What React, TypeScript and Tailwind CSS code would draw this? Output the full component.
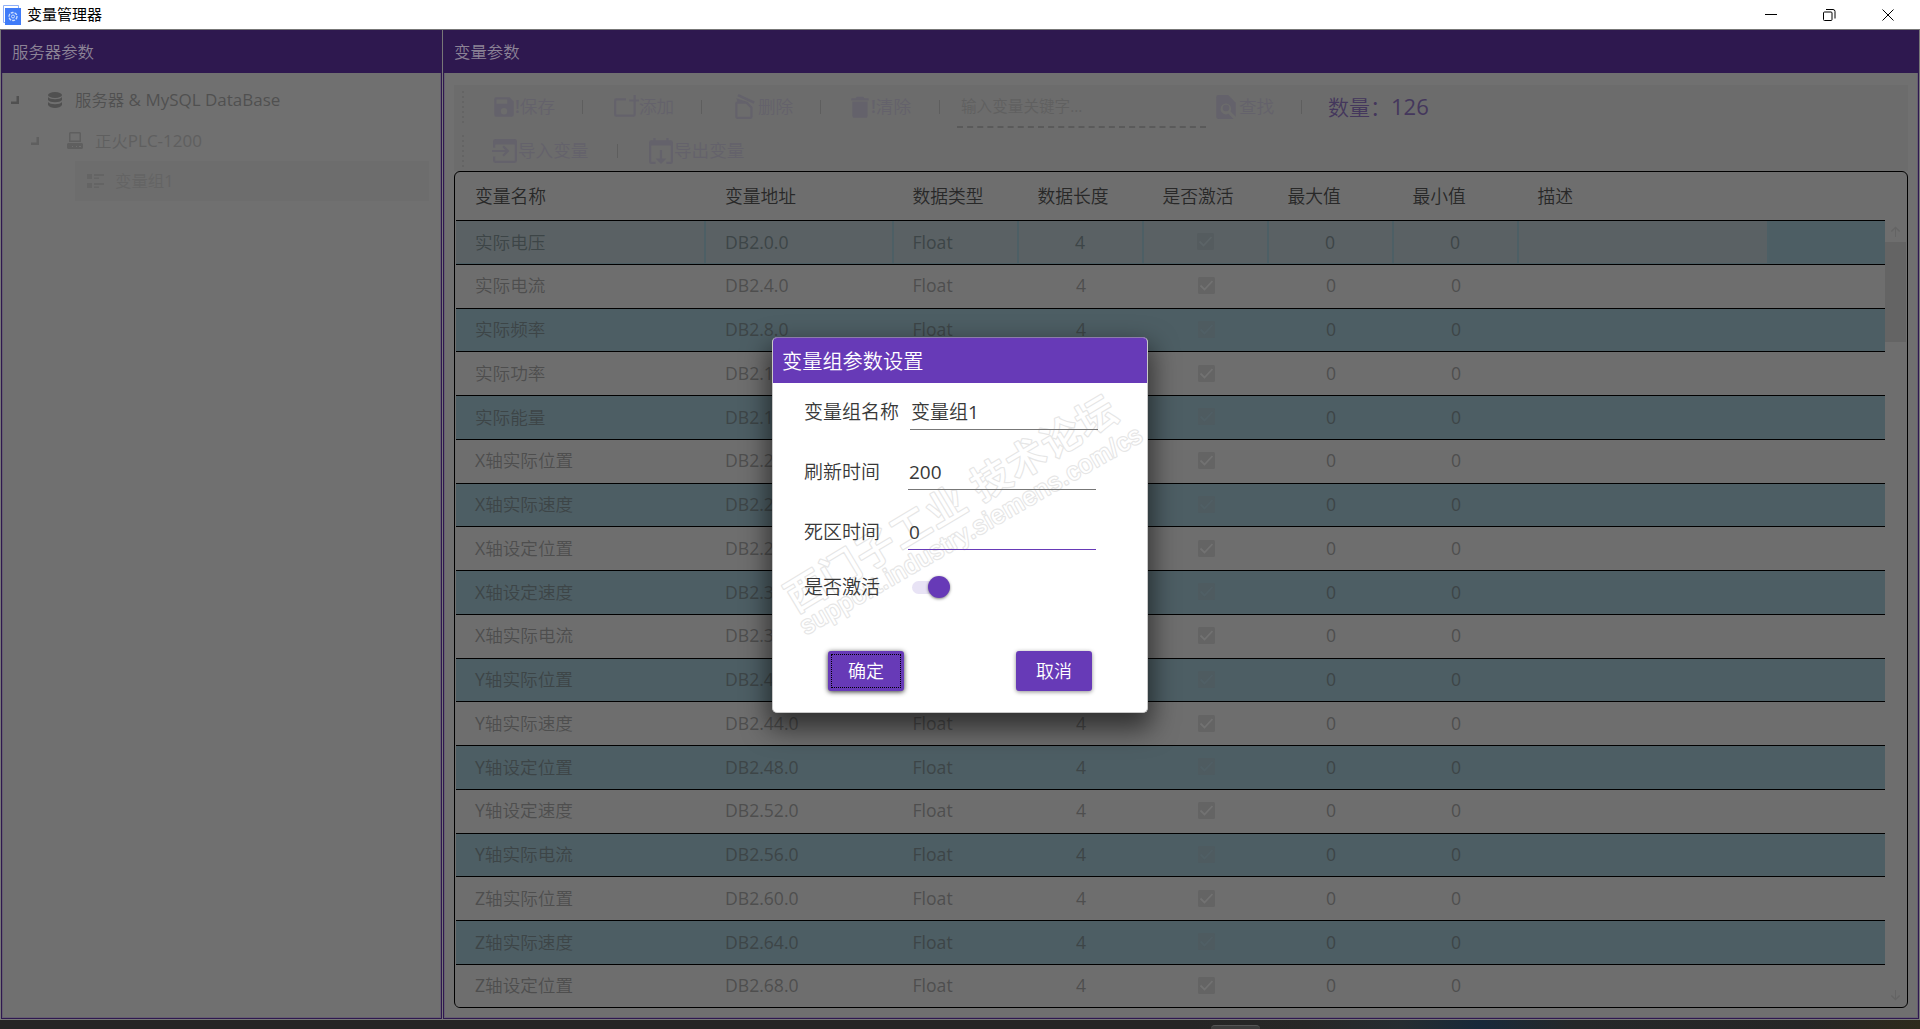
import type { ReactNode } from "react";

const names = ["实际电压","实际电流","实际频率","实际功率","实际能量","X轴实际位置","X轴实际速度","X轴设定位置","X轴设定速度","X轴实际电流","Y轴实际位置","Y轴实际速度","Y轴设定位置","Y轴设定速度","Y轴实际电流","Z轴实际位置","Z轴实际速度","Z轴设定位置"];
const headers = ["变量名称", "变量地址", "数据类型", "数据长度", "是否激活", "最大值", "最小值", "描述"];
const cols = "grid grid-cols-[250px_187.5px_125px_125px_125px_125px_125px_250px_1fr]";

function Icon({ d, className }: { d: string; className: string }) {
  return (
    <svg viewBox="0 0 24 24" className={className} fill="currentColor">
      <path fillRule="evenodd" d={d} />
    </svg>
  );
}

function Tool({ d, label, className }: { d: string; label: ReactNode; className: string }) {
  return (
    <div className={`flex h-10 shrink-0 items-center text-[#64626b] ${className}`}>
      <Icon d={d} className="size-[26px] shrink-0" />
      <span className="whitespace-nowrap text-[17.6px]">{label}</span>
    </div>
  );
}

const icons = {
  save: "M15 9H5V5h10m-3 14a3 3 0 1 1 0-6 3 3 0 0 1 0 6M17 3H5a2 2 0 0 0-2 2v14a2 2 0 0 0 2 2h14a2 2 0 0 0 2-2V7z",
  add: "M19 11h2v8a2 2 0 0 1-2 2H3a2 2 0 0 1-2-2V6a2 2 0 0 1 2-2h9v2H3v13h16zM19 1h2v4h4v2h-4v4h-2V7h-4V5h4z",
  remove: "M5 7h9l5 5v9a2 2 0 0 1-2 2H5a2 2 0 0 1-2-2V9a2 2 0 0 1 2-2m0 2v12h12v-8l-4-4zM6 0l15 7-1 2L5 2zM4 4l9 3H5z",
  trash: "M20 4h-4l-1-1.500h-6L8 4H4v2h16M5 20a2 2 0 0 0 2 2h10a2 2 0 0 0 2-2V7H5z",
  search: "M14 1H5a2 2 0 0 0-2 2v18a2 2 0 0 0 2 2h14l-4.8-4.8a5 5 0 1 1 2-2L21 21V8zm-2 9a3 3 0 1 0 0 6 3 3 0 0 0 0-6",
  import: "M3 1h18a2 2 0 0 1 2 2v18a2 2 0 0 1-2 2H3a2 2 0 0 1-2-2v-4h2v4h18V6H3v3H1V3a2 2 0 0 1 2-2m8 6 5 5-5 5-1.4-1.4 2.6-2.600H-1v-2h13.200L9.600 8.400z",
  export: "M5 2V0h2v2h10V0h2v2h2a2 2 0 0 1 2 2v18a2 2 0 0 1-2 2h-4v-2h4V7H3v15h4v2H3a2 2 0 0 1-2-2V4a2 2 0 0 1 2-2zm6 9h2v8h4l-5 5-5-5h4z",
};

function Divider({ className }: { className: string }) {
  return <i className={`h-[14px] w-px shrink-0 bg-[#5e5e5e] ${className}`} />;
}

function Grip() {
  return <i className="ml-2 h-8 w-0.5 shrink-0 bg-[repeating-linear-gradient(to_bottom,#646464_0_2px,transparent_2px_5px)]" />;
}

function Panel({ title, className, children }: { title: string; className: string; children: ReactNode }) {
  return (
    <section className={`flex flex-col bg-[#2e184f] ${className}`}>
      <h2 className="h-[43px] shrink-0 pl-[11px] text-[16.4px] leading-[44px] text-[#8c8396]">{title}</h2>
      <div className="mx-px mb-px min-h-0 flex-1 border border-[#665f70] border-t-0 bg-[#707070]">{children}</div>
    </section>
  );
}

function Expander() {
  return (
    <svg viewBox="0 0 8 8" className="size-2 shrink-0" fill="currentColor">
      <path d="M5.500 0H8v8H0V5.500h5.500z" />
    </svg>
  );
}

function Tree() {
  return (
    <div className="pl-2 pr-[11px] pt-[7px] text-[16.400px]">
      <div className="flex h-10 items-center text-[#505050]">
        <Expander />
        <svg viewBox="0 0 14 16" className="ml-[29px] h-4 w-3.5" fill="currentColor">
          <ellipse cx="7" cy="3" rx="7" ry="3" />
          <path d="M0 5c2 3 12 3 14 0v3c-2 3-12 3-14 0zM0 10c2 3 12 3 14 0v3c-2 4-12 4-14 0z" />
        </svg>
        <span className="ml-[13px] whitespace-pre">服务器<span className="text-[17px] font-normal"> &amp; MySQL DataBase</span></span>
      </div>
      <div className="flex h-[41px] items-center pl-5 text-[#5f5f5f]">
        <Expander />
        <svg viewBox="0 0 16 17" className="ml-7 h-[17px] w-4" fill="currentColor">
          <path fillRule="evenodd" d="M3 0h10l1 1v9H2V1zm.500 1.500v7h9v-7zM1 11h14l1 1v4l-1 1H1l-1-1v-4zm4 3v1h1v-1zm4 0v1h1v-1zm3 0v1h2v-1z" />
        </svg>
        <span className="ml-3">正火<span className="text-[17px] font-normal">PLC-1200</span></span>
      </div>
      <div className="ml-16 flex h-10 items-center bg-[#6d6d6d] pl-3 text-[#646464]">
        <svg viewBox="0 0 17 14" className="h-3.5 w-[17px]" fill="currentColor">
          <path d="M0 0h5v5H0zM7 0h10v2H7zM7 3.500h5v1.500H7zM0 9h5v5H0zM7 9h10v2H7zM7 12.500h5V14H7z" />
        </svg>
        <span className="ml-[11px]">变量组<span className="font-normal">1</span></span>
      </div>
    </div>
  );
}

function Check({ box, tick }: { box: string; tick: string }) {
  return (
    <svg viewBox="0 0 17 17" className="size-[17px]">
      <rect width="17" height="17" rx="1.500" fill={box} />
      <path d="m2.500 8.500 4 4 8-8.500" fill="none" stroke={tick} strokeWidth="1.800" />
    </svg>
  );
}

function Row({ name, i }: { name: string; i: number }) {
  const alt = i % 2 === 0;
  const cell = i === 0 ? "flex h-full items-center bg-[#5a6164] border-r-2 border-[#4d5f65]" : "flex h-full items-center";
  const box = i === 0 ? "#555c5f" : alt ? "#4e5b60" : "#646464";
  const tick = i === 0 ? "#5c6467" : alt ? "#505f65" : "#727272";
  const axis = name.charCodeAt(0) < 128 ? name[0] : "";
  return (
    <div className={`${cols} h-[43.760px] shrink-0 items-center border-b border-black pb-px text-[17.600px] font-normal ${alt ? "bg-[#4d5e64] text-[#3d4547]" : "bg-[#6e6e6e] text-[#4e4e4e]"}`}>
      <div className={`${cell} pl-[19px]`}>
        {axis}
        <span className="font-[350]">{name.slice(axis.length)}</span>
      </div>
      <div className={`${cell} pl-[19px]`}>{`DB2.${i * 4}.0`}</div>
      <div className={`${cell} pl-[19px]`}>Float</div>
      <div className={`${cell} justify-center`}>4</div>
      <div className={`${cell} justify-center`}><Check box={box} tick={tick} /></div>
      <div className={`${cell} justify-center`}>0</div>
      <div className={`${cell} justify-center`}>0</div>
      <div className={cell} />
    </div>
  );
}

function VariableTable() {
  return (
    <div className="flex h-[837px] w-[1454px] flex-col overflow-hidden rounded-[6px] border border-black bg-[#6e6e6e] pl-px">
      <div className={`${cols} h-[49px] w-[1429px] shrink-0 items-center border-b border-black text-[17.800px] text-[#282828]`}>
        {headers.map((h) => (
          <span key={h} className="pl-[19px]">{h}</span>
        ))}
      </div>
      <div className="flex min-h-0 flex-1">
        <div className="flex w-[1429px] flex-col overflow-hidden">
          {names.map((n, i) => (
            <Row key={i} name={n} i={i} />
          ))}
        </div>
        <div className="flex w-[21px] flex-col items-center">
          <Icon className="mb-[5px] mt-[5px] size-[11px] shrink-0 text-[#646464]" d="M11 24V6l-7 7-2-2L12 1l10 10-2 2-7-7v18z" />
          <i className="h-[100px] w-full bg-[#646464]" />
          <Icon className="mb-1.5 mt-auto size-[11px] shrink-0 text-[#646464]" d="M11 0v18l-7-7-2 2 10 10 10-10-2-2-7 7V0z" />
        </div>
      </div>
    </div>
  );
}

function Toolbar() {
  return (
    <div className="w-[1454px] bg-[#6c6c6c]">
      <div className="flex h-[43px] items-center">
        <Grip />
        <Tool className="ml-[27px] w-[91px]" d={icons.save} label={<><b className="-ml-0.5 font-semibold">!</b>保存</>} />
        <Divider className="" />
        <Tool className="ml-[30px] w-[85px]" d={icons.add} label="添加" />
        <Divider className="ml-[3px]" />
        <Tool className="ml-[30px] w-[84px]" d={icons.remove} label="删除" />
        <Divider className="ml-[4px]" />
        <Tool className="ml-[26px] w-[89px]" d={icons.trash} label={<><b className="-ml-0.5 font-semibold">!</b>清除</>} />
        <Divider className="ml-[3px]" />
        <div className="ml-[17px] flex h-full w-[249px] shrink-0 items-center self-start whitespace-nowrap border-b-2 border-dashed border-[#5a5a5a] pl-1 pt-0.5 text-[15.600px] text-[#606060]">输入变量关键字<span className="font-normal">...</span></div>
        <Tool className="ml-[7px] w-[84px]" d={icons.search} label="查找" />
        <Divider className="ml-1" />
        <div className="ml-[26px] whitespace-nowrap text-[21px] text-[#44375c]">数量：<span className="text-[22px] font-normal">126</span></div>
      </div>
      <div className="flex h-[43px] items-center pt-0.5">
        <Grip />
        <Tool className="ml-7 w-[125px]" d={icons.import} label="导入变量" />
        <Divider className="" />
        <Tool className="ml-[30px] w-[124px]" d={icons.export} label="导出变量" />
      </div>
    </div>
  );
}

function Field({ label, value, line, className }: { label: string; value: ReactNode; line: string; className: string }) {
  return (
    <div className={`flex h-[34px] items-start ${className}`}>
      <span className="w-[104px] shrink-0 whitespace-nowrap leading-[33px]">{label}</span>
      <span className={`h-[34px] w-[188px] shrink-0 border-b leading-[33px] ${line}`}>{value}</span>
    </div>
  );
}

function Watermark() {
  return (
    <svg viewBox="0 0 375 376" className="pointer-events-none absolute left-0 top-0 h-[376px] w-[375px]" fill="#ffffff" stroke="#e6e6e6" strokeWidth="2.400" strokeLinejoin="round" style={{ paintOrder: "stroke" }}>
      <text transform="translate(23 275) rotate(-31)" fontSize="39" fontWeight="500" textLength="378">西门子工业 技术论坛</text>
      <text transform="translate(33 297) rotate(-30)" fontSize="25" fontWeight="400" fontFamily="Liberation Sans" textLength="390">support.industry.siemens.com/cs</text>
    </svg>
  );
}

function Dialog() {
  return (
    <div className="absolute left-[772px] top-[337px] h-[376px] w-[376px] overflow-hidden rounded-[5px] border border-[#c9c9c9] border-t-[#8d7bab] bg-white text-[19px] text-[#383838] shadow-[0_12px_26px_4px_rgba(0,0,0,0.550)]">
      <Watermark />
      <h1 className="relative h-[45px] bg-[#673ab7] pl-[9px] text-[20.200px] leading-[46px] text-white">变量组参数设置</h1>
      <div className="relative pl-[31px] pt-[13px]">
        <Field label="变量组名称" value={<>变量组<span className="font-normal">1</span></>} line="border-[#777] ml-0.5 pl-px" className="" />
        <Field label="刷新时间" value="200" line="border-[#777] font-normal pl-px" className="mt-[26px]" />
        <Field label="死区时间" value="0" line="border-[#673ab7] font-normal pl-px" className="mt-[26px]" />
        <div className="mt-[21px] flex h-8 items-center">
          <span className="w-[108px]">是否激活</span>
          <span className="flex h-[13px] w-[38px] items-center justify-end rounded-full bg-[#e8e3f5]">
            <i className="size-[22px] shrink-0 rounded-full bg-[#673ab7] shadow-[0_1px_3px_rgba(0,0,0,0.500)]" />
          </span>
        </div>
      </div>
      <div className="relative mt-[48px] flex gap-[112px] pl-[55px] text-[18px] text-white">
        <button className="h-10 w-[76px] rounded-[3px] bg-[#673ab7] p-[3px] shadow-[0_1px_5px_rgba(0,0,0,0.800)]">
          <span className="flex h-full items-center justify-center border border-dotted border-black">确定</span>
        </button>
        <button className="h-10 w-[76px] rounded-[3px] bg-[#673ab7] shadow-[0_1px_4px_rgba(0,0,0,0.450)]">取消</button>
      </div>
    </div>
  );
}

export default function App() {
  return (
    <main className="relative flex h-[1029px] w-[1920px] flex-col overflow-hidden bg-[#272727] font-['Open_Sans','Noto_Sans_CJK_SC',sans-serif] font-[350]">
      <header className="flex h-[29px] shrink-0 items-center bg-white pl-[3px]">
        <svg viewBox="0 0 18 20" className="h-5 w-[18px]">
          <path d="M.500.500h15v17H.500z" fill="none" stroke="#8fb0f8" />
          <path d="M2 3h16v17H2z" fill="#3f7bf8" />
          <circle cx="10" cy="11.500" r="4" fill="none" stroke="#cfe0ff" strokeWidth="1.300" strokeDasharray="3 1" />
          <circle cx="10" cy="11.500" r="1.500" fill="none" stroke="#cfe0ff" />
        </svg>
        <span className="ml-1.5 text-[15px] font-normal text-black">变量管理器</span>
        <svg viewBox="0 0 130 12" className="ml-auto mr-[25px] h-3 w-[130px]" fill="none" stroke="#000">
          <path d="M0 5.500h12" />
          <rect x="58.500" y="3" width="8.500" height="8.500" rx="1" />
          <path d="M61 .500h7q2 0 2 2v7M117.500.500l11 11m0-11-11 11" />
        </svg>
      </header>
      <div className="flex h-[991px] shrink-0 gap-px bg-[#777] px-px pb-px pt-px">
        <Panel title="服务器参数" className="w-[441px] shrink-0">
          <Tree />
        </Panel>
        <Panel title="变量参数" className="min-w-0 flex-1">
          <div className="pl-[9px] pt-3">
            <Toolbar />
            <VariableTable />
          </div>
        </Panel>
      </div>
      <footer className="flex flex-1 overflow-hidden bg-[linear-gradient(to_right,#252525_0_62%,#272727_68%,#252d31_73%,#18293a_77%,#252829_82%,#262626_94%,#2e2a1c)]">
        <i className="ml-[1211px] mt-[5px] h-3 w-[49px] rounded-t-[4px] border-t border-[#555] bg-[#3c3c3c]" />
      </footer>
      <Dialog />
    </main>
  );
}
